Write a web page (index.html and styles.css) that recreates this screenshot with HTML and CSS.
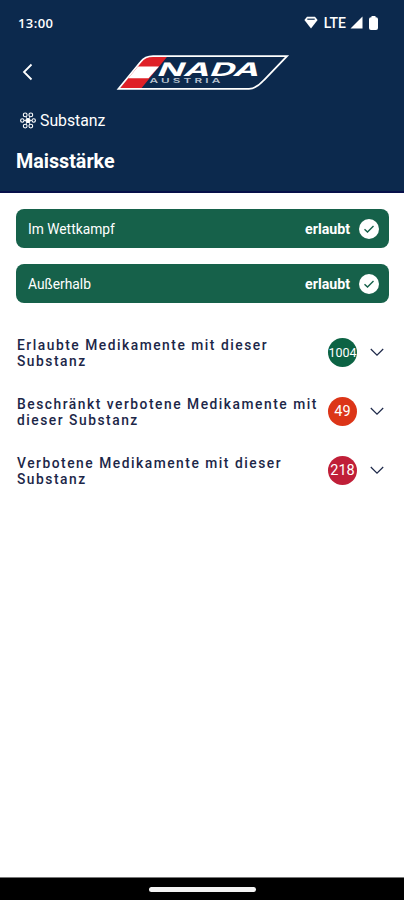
FILE: index.html
```html
<!DOCTYPE html>
<html lang="de">
<head>
<meta charset="utf-8">
<title>Maisstärke</title>
<link rel="stylesheet" href="styles.css">
</head>
<body>
<header class="header">
  <div class="status">
    <span class="time">13:00</span>
    <div class="status-icons">
      <svg width="14" height="13" viewBox="0 0 14 13"><path d="M3 .8h8L13.6 4 7 12.4.4 4z" fill="#fff"/><path d="M3.3 3.2h7.4" stroke="#0c294d" stroke-width="1.2"/></svg>
      <span class="lte">LTE</span>
      <svg class="signal" width="13" height="13" viewBox="0 0 13 13"><path d="M12.5.5v12H.5z" fill="#fff"/></svg>
      <svg class="battery" width="9" height="14" viewBox="0 0 9 14"><path d="M2.5 0h4v1.2H7A2 2 0 0 1 9 3.2V12a2 2 0 0 1-2 2H2a2 2 0 0 1-2-2V3.2a2 2 0 0 1 2-2h.5z" fill="#fff"/></svg>
    </div>
  </div>
  <nav class="nav">
    <svg class="back" width="12" height="18" viewBox="0 0 12 18"><path d="M9.5 1.5 2 9l7.5 7.5" fill="none" stroke="#fff" stroke-width="1.8"/></svg>
    <svg class="logo" width="174" height="38" viewBox="0 0 174 38">
      <path d="M3.5 34.8 24.5 8Q29 2.2 37 2.2H51.5L25 34.8Z" fill="#df2027"/>
      <path d="M22 12.5H43L32.5 24.2H12.2Z" fill="#fff"/>
      <path d="M2.5 34.8 24.5 8Q29 2.2 37 2.2H171L148 26Q140 34.8 133 34.8Z" fill="none" stroke="#fff" stroke-width="1.8"/>
      <text class="mark" transform="translate(40 21.8) skewX(-24)" textLength="102" lengthAdjust="spacingAndGlyphs">NADA</text>
      <text class="country" x="33.5" y="28.8" textLength="74" lengthAdjust="spacingAndGlyphs">AUSTRIA</text>
    </svg>
  </nav>
  <div class="kind">
    <svg width="16" height="17" viewBox="0 0 16 17" fill="none" stroke="#fff" stroke-width="1.1"><circle cx="5.2" cy="2.9" r="1.9"/><circle cx="10.8" cy="2.9" r="1.9"/><circle cx="2.3" cy="8.5" r="1.7"/><circle cx="13.7" cy="8.5" r="1.7"/><circle cx="5.2" cy="14.1" r="1.9"/><circle cx="10.8" cy="14.1" r="1.9"/><circle cx="8" cy="8.5" r="2" fill="#fff"/><path d="m6 4.8 4 7.4M10 4.8l-4 7.4M4 8.5h8" stroke-width=".8"/></svg>
    <span>Substanz</span>
  </div>
  <h1 class="title">Maisstärke</h1>
</header>
<main class="main">
  <section class="cards">
    <div class="card"><span>Im Wettkampf</span><strong>erlaubt</strong>
      <svg width="20" height="20" viewBox="0 0 20 20"><circle cx="10" cy="10" r="10" fill="#fff"/><path d="m5.5 10.2 3 2.9 6-6" fill="none" stroke="#16614a" stroke-width="1.4"/></svg></div>
    <div class="card"><span>Außerhalb</span><strong>erlaubt</strong>
      <svg width="20" height="20" viewBox="0 0 20 20"><circle cx="10" cy="10" r="10" fill="#fff"/><path d="m5.5 10.2 3 2.9 6-6" fill="none" stroke="#16614a" stroke-width="1.4"/></svg></div>
  </section>
  <section class="groups">
    <div class="group"><p>Erlaubte Medikamente mit dieser Substanz</p><span class="badge allowed">1004</span>
      <svg width="14" height="9" viewBox="0 0 14 9"><path d="m.8 1 6.2 6.2L13.2 1" fill="none" stroke="#1c2748" stroke-width="1.2"/></svg></div>
    <div class="group"><p>Beschränkt verbotene Medikamente mit dieser Substanz</p><span class="badge limited">49</span>
      <svg width="14" height="9" viewBox="0 0 14 9"><path d="m.8 1 6.2 6.2L13.2 1" fill="none" stroke="#1c2748" stroke-width="1.2"/></svg></div>
    <div class="group"><p>Verbotene Medikamente mit dieser Substanz</p><span class="badge banned">218</span>
      <svg width="14" height="9" viewBox="0 0 14 9"><path d="m.8 1 6.2 6.2L13.2 1" fill="none" stroke="#1c2748" stroke-width="1.2"/></svg></div>
  </section>
</main>
<footer class="system-bar"><div class="handle"></div></footer>
</body>
</html>
```
FILE: styles.css
```css
* { box-sizing: border-box; }
body {
  margin: 0;
  height: 900px;
  display: flex;
  flex-direction: column;
  background: #fff;
  color: #1c2748;
  font-family: Roboto, "Liberation Sans", sans-serif;
  overflow: hidden;
}
svg { display: block; flex: none; }
.header {
  height: 193px;
  flex: none;
  background: #0c294d;
  color: #fff;
  border-bottom: 2px solid #07104a;
}
.status {
  display: flex;
  justify-content: space-between;
  align-items: center;
  height: 45px;
  padding: 0 26px 0 18px;
}
.time { font: 600 13px/16px "Open Sans", sans-serif; letter-spacing: .4px; }
.status-icons { display: flex; align-items: center; }
.lte { font: 500 14px/16px Roboto, sans-serif; margin: 0 4px 0 6px; }
.signal { margin-right: 6px; }
.nav { display: flex; height: 54px; padding-left: 22px; }
.back { margin-top: 18px; }
.logo { margin: 8.5px 0 0 82px; }
.mark { font: 700 18.5px Inter, sans-serif; fill: #fff; }
.country { font: 600 6px Inter, sans-serif; letter-spacing: 1.6px; fill: #b8c3d0; }
.kind {
  display: flex;
  align-items: center;
  gap: 4px;
  height: 42px;
  padding-left: 20px;
  font-size: 15.8px;
}
.title { margin: 9px 0 0 16px; font-size: 19.7px; line-height: 24px; font-weight: 700; }
.main { flex: 1; padding: 16px 15px 0 16px; }
.cards { display: grid; gap: 16px; }
.card {
  display: flex;
  align-items: center;
  height: 39px;
  padding: 0 10px 0 12px;
  border-radius: 8px;
  background: #16614a;
  color: #fff;
  font-size: 13.8px;
}
.card strong { margin: 0 9px 0 auto; font-size: 14.2px; font-weight: 700; }
.groups { margin-top: 20px; padding-right: 5px; }
.group { display: flex; align-items: center; height: 59px; }
.group p {
  flex: none;
  width: 312px;
  margin: 0;
  padding-left: 1px;
  padding-right: 6px;
  font-size: 13.8px;
  line-height: 16px;
  font-weight: 500;
  letter-spacing: 1.52px;
}
.badge {
  flex: none;
  width: 29px;
  height: 29px;
  margin-right: 13px;
  border-radius: 50%;
  color: #fff;
  text-align: center;
  font-size: 14.5px;
  line-height: 30px;
}
.allowed { background: #0c6344; font-size: 12.5px; }
.limited { background: #dc3518; }
.banned { background: #c01f38; }
.system-bar {
  height: 23px;
  flex: none;
  background: #000;
  border-top: 1px solid #777;
  display: flex;
  justify-content: center;
  align-items: center;
}
.handle { width: 107px; height: 5px; border-radius: 3px; background: #f4f4f4; }
```
